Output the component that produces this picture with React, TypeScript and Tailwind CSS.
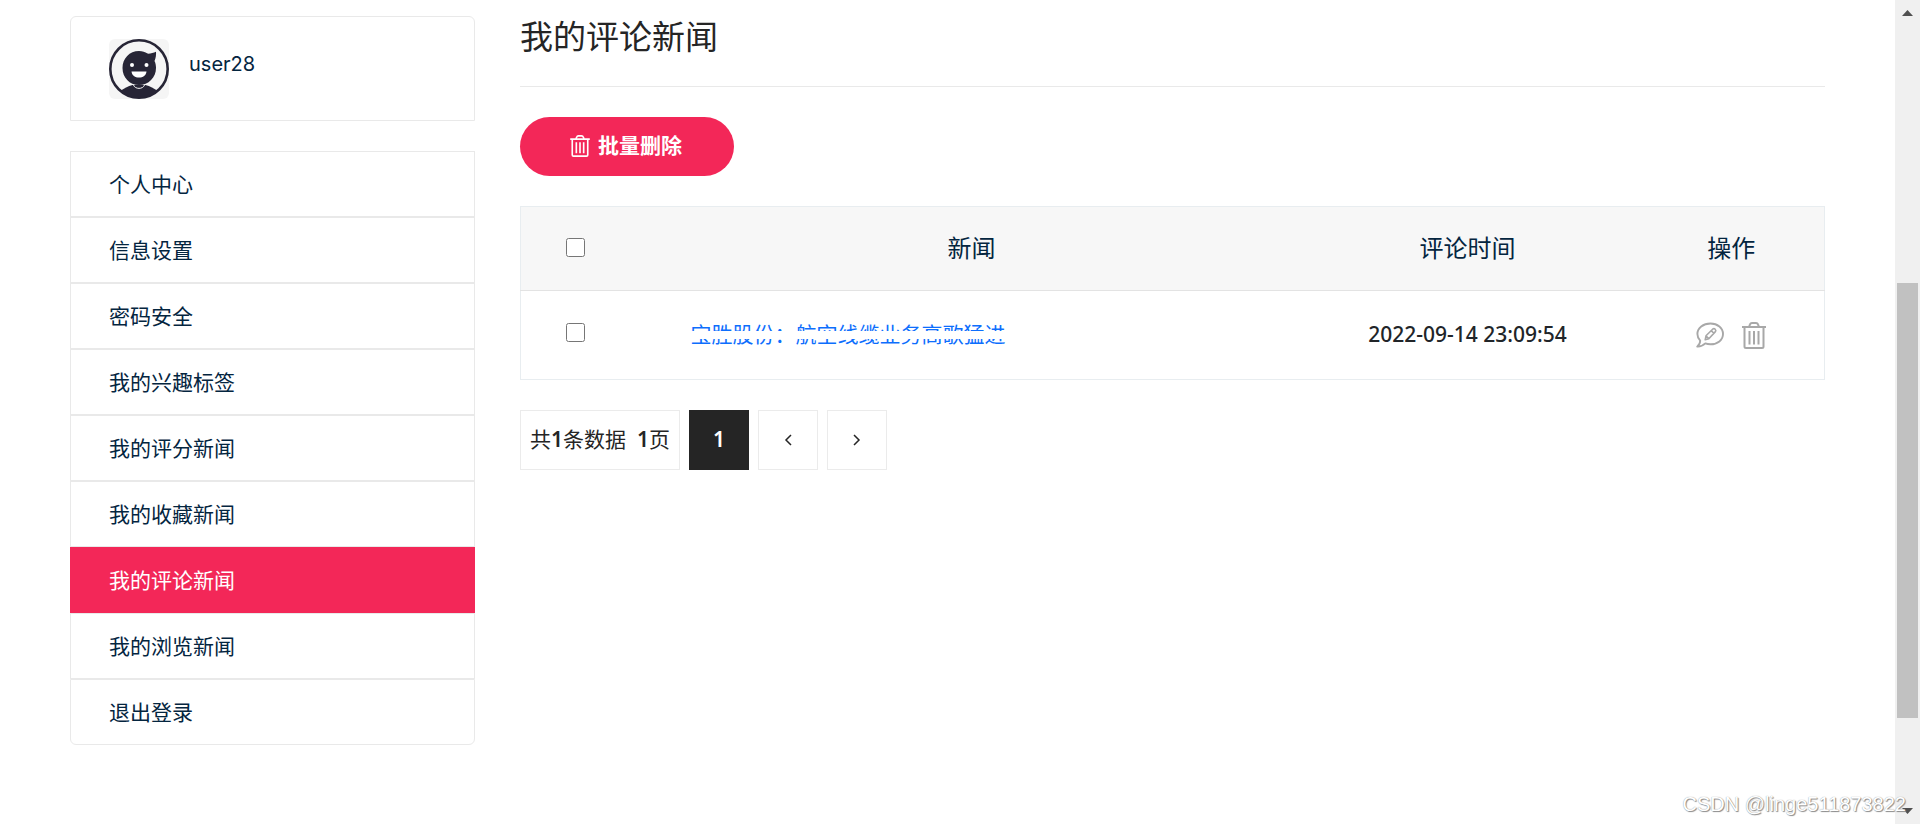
import { useState } from 'react';

interface MenuItem {
  label: string;
  href: string;
}

interface CommentRow {
  id: number;
  title: string;
  time: string;
}

const MENU: MenuItem[] = [
  { label: '个人中心', href: '#center' },
  { label: '信息设置', href: '#profile' },
  { label: '密码安全', href: '#password' },
  { label: '我的兴趣标签', href: '#tags' },
  { label: '我的评分新闻', href: '#scores' },
  { label: '我的收藏新闻', href: '#favorites' },
  { label: '我的评论新闻', href: '#comments' },
  { label: '我的浏览新闻', href: '#history' },
  { label: '退出登录', href: '#logout' },
];

const ROWS: CommentRow[] = [
  { id: 1, title: '宝胜股份：航空线缆业务高歌猛进', time: '2022-09-14 23:09:54' },
];

const ACTIVE = '#comments';

function TrashIcon({ className }: { className: string }) {
  return (
    <svg viewBox="0 0 24 27" fill="none" stroke="currentColor" strokeWidth="2" className={className} aria-hidden="true">
      <path d="M0 5H24M2.5 5V24.5Q2.5 26 4 26H20Q21.5 26 21.5 24.5V5" />
      <path d="M7 5L8 2.4Q8.5 1 10 1H14Q15.5 1 16 2.4L17 5" />
      <path d="M7.5 9V22.5M12 9V22.5M16.5 9V22.5" />
    </svg>
  );
}

function CommentIcon() {
  return (
    <svg viewBox="0 0 28 26" fill="none" stroke="currentColor" strokeWidth="1.9" strokeLinejoin="round" className="h-[26px] w-7" aria-hidden="true">
      <path d="M14.5 1.5C21.5 1.5 27 6 27 12C27 18 21.5 22.3 14.5 22.3C12.6 22.3 10.8 22 9.3 21.4C7 23.6 4 24.8 1.2 24.6C3.2 22.9 4.3 21 4.2 18.6C2.4 16.8 1.4 14.5 1.4 12C1.4 6 7.2 1.5 14.5 1.5Z" />
      <path strokeWidth="1.6" d="M9.2 17.8L10 13.8L16.6 7.2Q18 6 19.2 7.2Q20.5 8.6 19.2 9.9L12.8 16.8ZM15.3 8.6L17.8 11.2M10 13.8L12.8 16.8" />
    </svg>
  );
}

function Avatar() {
  return (
    <svg viewBox="0 0 60 60" className="size-[60px] rounded-md bg-[#f5f5f5]" role="img" aria-label="avatar">
      <clipPath id="avatar-ring">
        <circle cx="30" cy="30" r="29" />
      </clipPath>
      <circle cx="30" cy="30" r="28.7" fill="none" stroke="#272536" strokeWidth="2.6" />
      <path clipPath="url(#avatar-ring)" fill="#272536" d="M11 53C15 49 19 47 23.5 46H36.5C41 47 45 49 49 53V60H11Z" />
      <path fill="#272536" d="M30 12C33.5 12 36 13 38.5 14.6C41 14.8 44.5 14 47 12.8C47.3 16 46.8 19 45.5 22C46.5 24 47 26.5 47 29C47 38.5 39.5 46 30 46C20.5 46 13.5 38.5 13.5 29C13.5 19.5 20.5 12 30 12Z" />
      <path fill="none" stroke="#f5f5f5" strokeWidth="1" d="M24.5 46C26 50.5 34 50.5 35.5 46" />
      <circle cx="23" cy="26" r="2" fill="#fff" />
      <circle cx="37.5" cy="26" r="2" fill="#fff" />
      <path fill="#fff" d="M22.5 32.5H37.5C37 36.5 34 38.5 30 38.5C26 38.5 23 36.5 22.5 32.5Z" />
    </svg>
  );
}

function Sidebar() {
  return (
    <aside className="w-[405px] shrink-0">
      <div className="flex gap-5 rounded-t-md border border-[#e9e9e9] px-[38px] pt-[22px] pb-[21px]">
        <Avatar />
        <h2 className="pt-[13px] text-xl leading-6">user28</h2>
      </div>
      <nav className="mt-[30px]">
        {MENU.map((item) => (
          <a
            key={item.href}
            href={item.href}
            className={
              item.href === ACTIVE
                ? 'block border border-[#f32758] bg-[#f32758] px-[38px] pt-[17px] pb-[15px] text-[21px] leading-8 text-white'
                : 'block border border-[#e9e9e9] px-[38px] pt-[17px] pb-[15px] text-[21px] leading-8 last:rounded-b-md'
            }
          >
            {item.label}
          </a>
        ))}
      </nav>
    </aside>
  );
}

function Checkbox({ label, checked, onChange }: { label: string; checked: boolean; onChange: () => void }) {
  return <input type="checkbox" aria-label={label} checked={checked} onChange={onChange} className="block size-[19px]" />;
}

function CommentTable() {
  const [selected, setSelected] = useState<number[]>([]);
  const allSelected = selected.length === ROWS.length;

  const toggle = (id: number) =>
    setSelected((prev) => (prev.includes(id) ? prev.filter((x) => x !== id) : [...prev, id]));

  return (
    <table className="mt-[30px] w-full table-fixed border border-[#e8edf0]">
      <thead>
        <tr className="h-[84px] border-b border-[#e3e3e3] bg-[#f7f7f7] text-2xl">
          <th className="w-[126px] pb-0.5 pl-[45px]">
            <Checkbox label="全选" checked={allSelected} onChange={() => setSelected(allSelected ? [] : ROWS.map((r) => r.id))} />
          </th>
          <th className="font-normal">新闻</th>
          <th className="w-[342px] font-normal">评论时间</th>
          <th className="w-[186px] font-normal">操作</th>
        </tr>
      </thead>
      <tbody>
        {ROWS.map((row) => (
          <tr key={row.id} className="h-[89px]">
            <td className="pb-1.5 pl-[45px]">
              <Checkbox label={row.title} checked={selected.includes(row.id)} onChange={() => toggle(row.id)} />
            </td>
            <td className="pl-11 text-[21px] leading-8">
              <a href="#news" className="relative inline-block text-[#0d6efd]">
                {row.title}
                {/* strip that hides the middle of the headline */}
                <span className="absolute inset-x-0 top-3 h-2 bg-white" />
              </a>
            </td>
            <td className="text-center font-['Noto_Sans',sans-serif] text-[21px] font-medium text-[#212529]">{row.time}</td>
            <td>
              <div className="flex items-center justify-center gap-[18px] text-[#a8a8a8]">
                <button type="button" aria-label="编辑评论">
                  <CommentIcon />
                </button>
                <button type="button" aria-label="删除">
                  <TrashIcon className="h-[27px] w-6" />
                </button>
              </div>
            </td>
          </tr>
        ))}
      </tbody>
    </table>
  );
}

function Pagination() {
  return (
    <nav className="mt-[30px] flex gap-[9px] font-['Noto_Sans','Noto_Sans_CJK_SC',sans-serif] text-[21px] text-[#252525]">
      <span className="flex h-[60px] items-center border border-[#ebebeb] px-[9px] whitespace-pre">
        共<b className="font-semibold">1</b>条数据{'  '}<b className="font-semibold">1</b>页
      </span>
      <button type="button" className="size-[60px] bg-[#252525] font-semibold text-white">1</button>
      <button type="button" aria-label="上一页" className="flex size-[60px] items-center justify-center border border-[#ebebeb]">
        <svg viewBox="0 0 8 12" className="h-3 w-2" fill="none" stroke="currentColor" strokeWidth="1.5">
          <path d="M7 1L2 6L7 11" />
        </svg>
      </button>
      <button type="button" aria-label="下一页" className="flex size-[60px] items-center justify-center border border-[#ebebeb]">
        <svg viewBox="0 0 8 12" className="h-3 w-2" fill="none" stroke="currentColor" strokeWidth="1.5">
          <path d="M1 1L6 6L1 11" />
        </svg>
      </button>
    </nav>
  );
}

function ScrollRail() {
  return (
    <div className="flex w-[25px] shrink-0 flex-col items-center justify-between bg-[#f0f0f0] py-[10px] text-[#505050]" aria-hidden="true">
      <svg viewBox="0 0 11 6" className="h-[6px] w-[11px]" fill="currentColor">
        <path d="M0 6L5.5 0L11 6Z" />
      </svg>
      <div className="flex w-full flex-1 flex-col px-[2px]">
        <div className="grow-[267]" />
        <div className="grow-[435] bg-[#c1c1c1]" />
        <div className="grow-[90]" />
      </div>
      <svg viewBox="0 0 11 6" className="h-[6px] w-[11px]" fill="currentColor">
        <path d="M0 0L5.5 6L11 0Z" />
      </svg>
    </div>
  );
}

export default function App() {
  return (
    <div className="relative flex min-h-screen bg-white font-['Inter','Noto_Sans_CJK_SC',sans-serif] text-[#04253f]">
      <div className="flex flex-1 items-start gap-[45px] px-[70px] pt-4">
        <Sidebar />
        <main className="min-w-0 flex-1">
          <h1 className="border-b border-[#e9e9e9] pt-px pb-[29px] text-[33px] leading-10 text-[#252525]">我的评论新闻</h1>
          <button
            type="button"
            className="mt-[30px] flex h-[59px] items-center gap-2 rounded-full bg-[#f32758] pr-[52px] pb-0.5 pl-[50px] text-[21px] font-bold text-white"
          >
            <TrashIcon className="h-[22px] w-5" />
            批量删除
          </button>
          <CommentTable />
          <Pagination />
        </main>
      </div>
      <ScrollRail />
      <div className="absolute right-[14px] bottom-2 font-['Liberation_Sans',sans-serif] text-xl leading-6 text-white [text-shadow:1px_1px_1px_#888,0_0_1px_#888]">
        CSDN @linge511873822
      </div>
    </div>
  );
}
